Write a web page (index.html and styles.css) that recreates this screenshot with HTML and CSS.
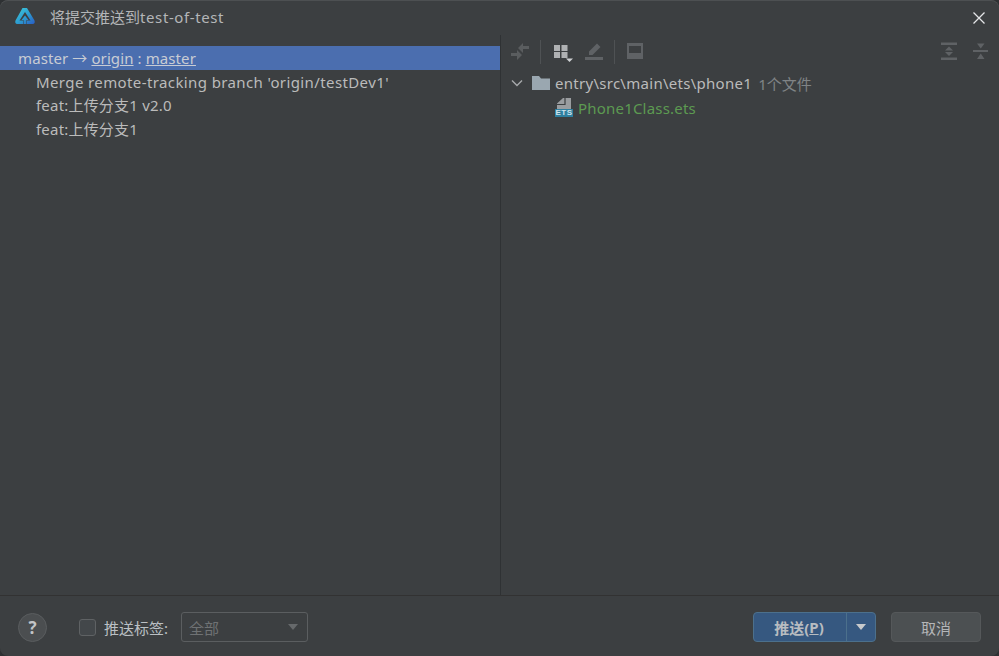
FILE: index.html
```html
<!DOCTYPE html>
<html lang="zh">
<head>
<meta charset="utf-8">
<title>将提交推送到test-of-test</title>
<link rel="stylesheet" href="styles.css">
</head>
<body>
<div class="dialog">
  <header class="titlebar">
    <svg class="logo" width="20" height="16" viewBox="0 0 20 16">
      <defs><linearGradient id="lg" x1="0" y1="0" x2="1" y2="1"><stop offset="0" stop-color="#3fd0dc"/><stop offset=".55" stop-color="#2c9ad0"/><stop offset="1" stop-color="#2a5cc4"/></linearGradient></defs>
      <path d="M7.500 0h4.500l7.500 12.500Q20.500 16 17 16H12V12.500h3.500L10 4 4.500 12.500H8V16H3Q-.5 16 .5 12.500ZM10 7.500l3.500 4.500h-2v4h-3v-4h-2z" fill="url(#lg)"/>
    </svg>
    <span class="title">将提交推送到<span class="title-latin">test-of-test</span></span>
    <svg class="close" width="14" height="14" viewBox="0 0 14 14"><path d="M1.500 1.500l11 11M12.500 1.500l-11 11" stroke="#e4e6e8" stroke-width="1.300" fill="none"/></svg>
  </header>
  <main class="body">
    <section class="commits">
      <div class="branch-row">master <span class="arrow">→</span> <u>origin</u> : <u>master</u></div>
      <div class="commit merge">Merge remote-tracking branch 'origin/testDev1'</div>
      <div class="commit">feat:上传分支1 v2.0</div>
      <div class="commit">feat:上传分支1</div>
    </section>
    <section class="changes">
      <div class="toolbar">
        <svg class="tool" width="20" height="20" viewBox="0 0 20 20"><path d="M13 4h6v3h-6zM13 1v10L8 6zM1 11h6v3H1zM7 8v10l5-5z" fill="#5a5d5f"/></svg>
        <span class="sep"></span>
        <svg class="tool" width="20" height="20" viewBox="0 0 20 20"><path d="M2 3h6v6H2zM9.500 3h6v6h-6zM2 10h6v6H2zM9.500 10h6v6h-6z" fill="#afb1b3"/><path d="M14 16.500h7l-3.500 3.500z" fill="#d0d2d4"/></svg>
        <svg class="tool" width="20" height="20" viewBox="0 0 20 20"><path d="M5 13V9.500L13 1.500 16.500 5 8.500 13zM1 15h18v3H1z" fill="#5f6265"/></svg>
        <span class="sep"></span>
        <svg class="tool" width="20" height="20" viewBox="0 0 20 20"><path d="M1 1h16v16H1zM3 4v7h12V4z" fill="#5f6265" fill-rule="evenodd"/></svg>
        <span class="grow"></span>
        <svg class="tool" width="20" height="20" viewBox="0 0 20 20"><path d="M2 .5h16V3H2zM2 15.500h16V18H2zM10 4.500l4 4H6zM10 14l-4-4h8z" fill="#5f6265"/></svg>
        <svg class="tool" width="20" height="20" viewBox="0 0 20 20"><path d="M2 8h15v2H2zM6 1.500h7.500L9.750 6.500zM9.750 11.500l3.750 5.500H6z" fill="#5f6265"/></svg>
      </div>
      <div class="tree-row">
        <svg class="chev" width="12" height="8" viewBox="0 0 12 8"><path d="M1 1.500l5 5 5-5" stroke="#a7a9ab" stroke-width="1.400" fill="none"/></svg>
        <svg class="folder" width="18" height="14" viewBox="0 0 18 14"><path d="M0 0h7l2 2.500h9V14H0z" fill="#9aa7b0"/></svg>
        <span class="path">entry\src\main\ets\phone1</span>
        <span class="count">1个文件</span>
      </div>
      <div class="file-row">
        <span class="ets"><svg width="18" height="11" viewBox="0 0 18 11"><path d="M2 11V5.500L8 0h8v11z" fill="#9a9da0"/><path d="M2 6.500h8V0" stroke="#3c3f41" stroke-width="1.200" fill="none"/></svg><b>ETS</b></span>
        <span class="filename">Phone1Class.ets</span>
      </div>
    </section>
  </main>
  <footer class="footer">
    <button class="help">?</button>
    <label class="tags"><span class="check"></span>推送标签:</label>
    <div class="select"><span>全部</span><i class="caret dim"></i></div>
    <span class="grow"></span>
    <div class="split"><span class="main">推送(<u>P</u>)</span><span class="drop"><i class="caret"></i></span></div>
    <button class="cancel">取消</button>
  </footer>
</div>
</body>
</html>
```
FILE: styles.css
```css
* { box-sizing: border-box; }
html, body { margin: 0; height: 100%; }
body { background: #2e3133; font-family: "Noto Sans", "Noto Sans CJK SC", sans-serif; font-size: 15px; color: #bbbbbb; overflow: hidden; }
.dialog { width: 999px; height: 656px; display: flex; flex-direction: column; background: #3c3f41; border-radius: 8px; box-shadow: inset 0 1px 0 #4d5052; }
.titlebar { height: 35px; display: flex; align-items: center; padding: 0 13px 0 15px; flex: none; }
.logo { flex: none; margin-top: -3px; }
.title { margin-left: 15px; margin-top: -2px; color: #b4b6b8; flex: 1; }
.title-latin { letter-spacing: .6px; }
.close { flex: none; }
.body { flex: 1; display: flex; min-height: 0; border-bottom: 1px solid #323232; }
.commits { width: 501px; flex: none; border-right: 1px solid #2f3234; padding-top: 11px; }
.branch-row { height: 24px; line-height: 24px; background: #4b6eaf; padding-left: 18px; color: #c8ccd4; letter-spacing: .1px; }
.arrow { font-family: "Noto Sans CJK SC", sans-serif; }
.commit { height: 24px; line-height: 22px; padding-left: 36px; letter-spacing: .2px; }
.merge { letter-spacing: .39px; line-height: 24px; }
.changes { flex: 1; display: flex; flex-direction: column; }
.toolbar { height: 33px; display: flex; align-items: center; padding: 0 8px 0 9px; flex: none; }
.tool { flex: none; overflow: visible; }
.tool + .tool { margin-left: 12px; }
.sep { width: 1px; height: 24px; background: #4f5254; margin: 0 11px 0 10px; }
.grow { flex: 1; }
.tree-row { height: 24px; margin-top: 3px; display: flex; align-items: center; padding-left: 10px; }
.chev { flex: none; }
.folder { margin-left: 9px; flex: none; }
.path { margin-left: 5px; letter-spacing: .28px; }
.count { margin-left: 6px; color: #808486; }
.file-row { height: 24px; display: flex; align-items: center; padding-left: 54px; }
.ets { width: 18px; height: 19px; position: relative; display: block; flex: none; }
.ets svg { display: block; }
.ets b { display: block; position: absolute; left: 0; right: 0; bottom: 0; height: 8px; background: #2f7f9f; color: #cfe3ec; font: 700 8px/8px "Liberation Sans", sans-serif; letter-spacing: .5px; text-align: center; }
.filename { margin-left: 5px; margin-top: 2px; color: #5c9a51; letter-spacing: .2px; }
.footer { height: 60px; flex: none; display: flex; align-items: center; padding: 2px 18px 0 18px; }
.help { width: 29px; height: 29px; border-radius: 50%; border: 1px solid #5a5d5f; background: #4b4e50; color: #c2c4c6; font: 700 17px "Open Sans", sans-serif; padding: 0; }
.tags { display: flex; align-items: center; margin-left: 32px; color: #bbc0c4; }
.check { width: 17px; height: 17px; border: 1px solid #5f6264; border-radius: 3px; background: #43474a; margin-right: 8px; }
.select { width: 127px; height: 30px; margin-left: 13px; border: 1px solid #5b5e60; border-radius: 3px; display: flex; align-items: center; justify-content: space-between; padding: 0 9px 0 7px; color: #6f7274; }
.caret { display: block; width: 0; height: 0; border-left: 5.500px solid transparent; border-right: 5.500px solid transparent; border-top: 6px solid #c8cacc; }
.caret.dim { border-top-color: #66696b; }
.split { width: 123px; height: 30px; display: flex; border: 1px solid #4c708c; border-radius: 4px; background: #365880; color: #b8bcc0; font-weight: 700; }
.main { flex: 1; display: flex; align-items: center; justify-content: center; padding-right: 2px; }
.drop { width: 29px; border-left: 1px solid #4c708c; display: flex; align-items: center; justify-content: center; }
.cancel { width: 90px; height: 30px; margin-left: 15px; border: 1px solid #55585a; border-radius: 4px; background: #4c5052; color: #b4b6b8; font: 15px "Noto Sans", "Noto Sans CJK SC", sans-serif; padding: 0; }
```
